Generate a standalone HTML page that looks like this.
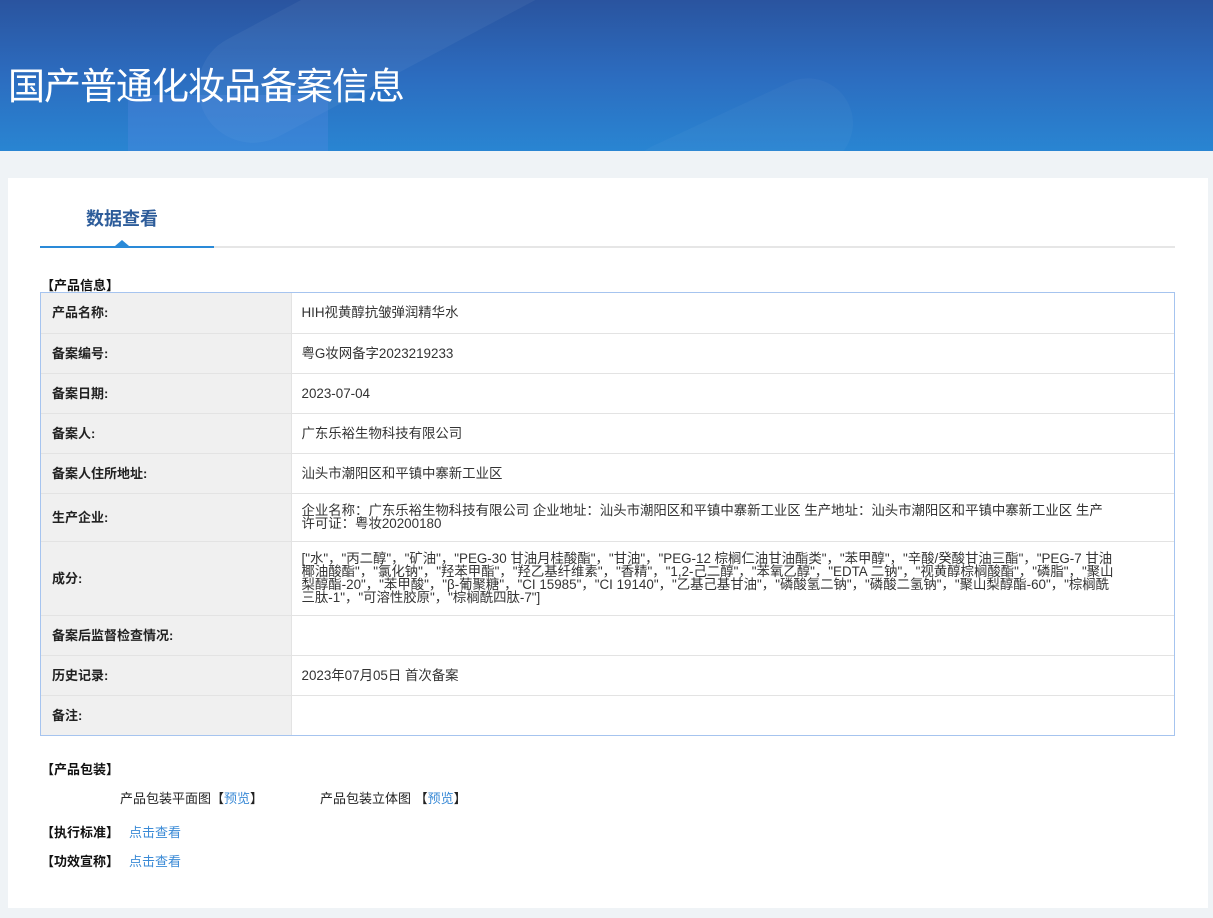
<!DOCTYPE html>
<html><head><meta charset="utf-8"><style>
*{margin:0;padding:0;box-sizing:border-box}
body{width:1213px;height:918px;overflow:hidden;background:#eff3f6;font-family:"Liberation Sans","Noto Sans CJK SC",sans-serif;color:#333;font-size:13px}
.hd{position:absolute;left:0;top:0;width:1213px;height:151px;background:linear-gradient(180deg,#2a549f 0%,#2c6cbf 50%,#2985d2 100%);overflow:hidden}
.hd .s1{position:absolute;left:180px;top:-40px;width:420px;height:110px;border-radius:55px;background:rgba(255,255,255,0.05);transform:rotate(-28deg)}
.hd .s2{position:absolute;left:128px;top:95px;width:200px;height:80px;background:rgba(90,140,230,0.3)}
.hd .s3{position:absolute;left:620px;top:110px;width:240px;height:90px;border-radius:45px;background:rgba(255,255,255,0.03);transform:rotate(-25deg)}
.hd h1{position:absolute;left:8px;top:56px;color:#fff;font-size:37px;font-weight:normal;letter-spacing:-1px;font-family:"Noto Sans CJK SC",sans-serif}
.card{position:absolute;left:8px;top:178px;width:1200px;height:730px;background:#fff}
.tab{position:absolute;left:32px;top:68px;width:1135px;height:2px;background:#e6e6e6}
.tab i{position:absolute;left:0;top:0;width:174px;height:2px;background:#2a8ad8}
.tab b{position:absolute;left:75px;top:-6px;width:0;height:0;border-style:solid;border-color:transparent transparent #2a8ad8 transparent;border-width:0 7px 6px 7px}
.tt{position:absolute;left:78px;top:27px;font-size:18px;font-weight:bold;color:#2d5c9a}
.sec{position:absolute;font-weight:bold;color:#111;font-size:13px}
.tw{position:absolute;left:32px;top:114px;width:1135px;border:1px solid #a6c4ef}
table{width:100%;border-collapse:collapse}
td{border-bottom:1px solid #e3e3e3;padding:0 10px;vertical-align:middle;line-height:13px}
tr:last-child td{border-bottom:0}
td.l{width:250px;background:#f0f0f0;font-weight:bold;color:#222;padding-left:11px;border-right:1px solid #e3e3e3}
td.v{color:#333;padding-right:60px;font-size:13.4px}
a{color:#3a8ad6;text-decoration:none}
.t{position:absolute;color:#222}
</style></head><body>
<div class="hd"><div class="s1"></div><div class="s2"></div><div class="s3"></div><h1>国产普通化妆品备案信息</h1></div>
<div class="card">
<div class="tt">数据查看</div>
<div class="tab"><i></i><b></b></div>
<div class="sec" style="left:33px;top:97px">【产品信息】</div>
<div class="tw"><table>
<tr style="height:40px"><td class="l">产品名称:</td><td class="v">HIH视黄醇抗皱弹润精华水</td></tr>
<tr style="height:40px"><td class="l">备案编号:</td><td class="v">粤G妆网备字2023219233</td></tr>
<tr style="height:40px"><td class="l">备案日期:</td><td class="v">2023-07-04</td></tr>
<tr style="height:40px"><td class="l">备案人:</td><td class="v">广东乐裕生物科技有限公司</td></tr>
<tr style="height:40px"><td class="l">备案人住所地址:</td><td class="v">汕头市潮阳区和平镇中寨新工业区</td></tr>
<tr style="height:48px"><td class="l">生产企业:</td><td class="v">企业名称：广东乐裕生物科技有限公司 企业地址：汕头市潮阳区和平镇中寨新工业区 生产地址：汕头市潮阳区和平镇中寨新工业区 生产许可证：粤妆20200180</td></tr>
<tr style="height:74px"><td class="l">成分:</td><td class="v">["水"，"丙二醇"，"矿油"，"PEG-30 甘油月桂酸酯"，"甘油"，"PEG-12 棕榈仁油甘油酯类"，"苯甲醇"，"辛酸/癸酸甘油三酯"，"PEG-7 甘油椰油酸酯"，"氯化钠"，"羟苯甲酯"，"羟乙基纤维素"，"香精"，"1,2-己二醇"，"苯氧乙醇"，"EDTA 二钠"，"视黄醇棕榈酸酯"，"磷脂"，"聚山梨醇酯-20"，"苯甲酸"，"β-葡聚糖"，"CI 15985"，"CI 19140"，"乙基己基甘油"，"磷酸氢二钠"，"磷酸二氢钠"，"聚山梨醇酯-60"，"棕榈酰三肽-1"，"可溶性胶原"，"棕榈酰四肽-7"]</td></tr>
<tr style="height:40px"><td class="l">备案后监督检查情况:</td><td class="v"></td></tr>
<tr style="height:40px"><td class="l">历史记录:</td><td class="v">2023年07月05日 首次备案</td></tr>
<tr style="height:40px"><td class="l">备注:</td><td class="v"></td></tr>
</table></div>
<div class="sec" style="left:33px;top:581px">【产品包装】</div>
<div class="t" style="left:112px;top:610px">产品包装平面图【<a>预览</a>】</div>
<div class="t" style="left:312px;top:610px">产品包装立体图 【<a>预览</a>】</div>
<div class="sec" style="left:33px;top:644px">【执行标准】</div><a class="t" style="left:121px;top:644px;color:#3a8ad6">点击查看</a>
<div class="sec" style="left:33px;top:673px">【功效宣称】</div><a class="t" style="left:121px;top:673px;color:#3a8ad6">点击查看</a>
</div>
</body></html>
